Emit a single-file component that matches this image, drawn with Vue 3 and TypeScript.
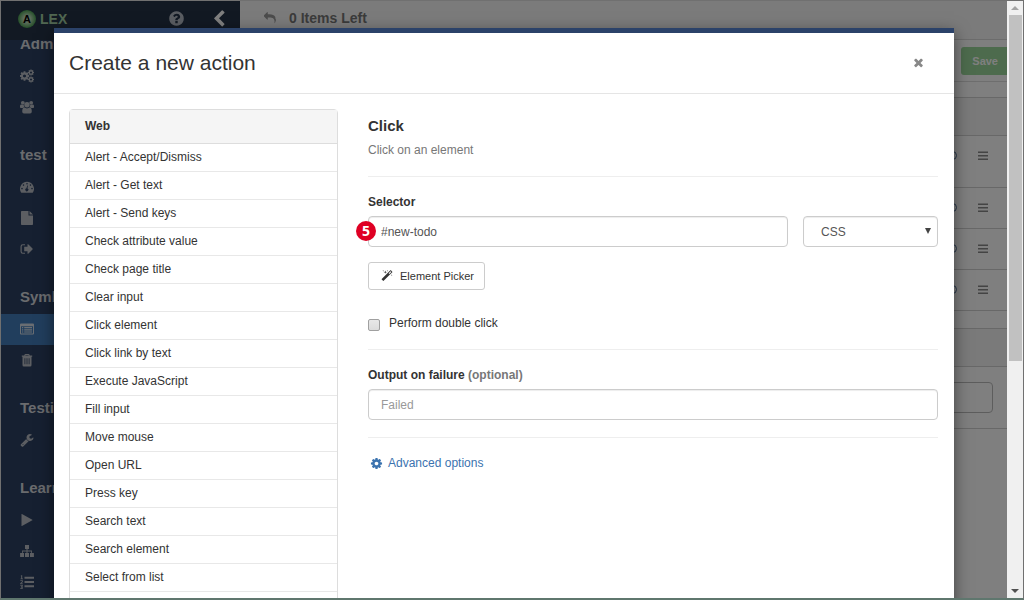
<script setup lang="ts">
import { ref } from 'vue'

interface NavGroup {
  title: string
  items: { icon: string; label: string; active?: boolean }[]
}

const groups: NavGroup[] = [
  { title: 'Admin', items: [{ icon: 'cogs', label: 'Settings' }, { icon: 'users', label: 'Users' }] },
  {
    title: 'test',
    items: [
      { icon: 'gauge', label: 'Dashboard' },
      { icon: 'file', label: 'Files' },
      { icon: 'exit', label: 'Close project' },
    ],
  },
  { title: 'Symbols', items: [{ icon: 'table', label: 'Manage', active: true }, { icon: 'trash', label: 'Trash' }] },
  { title: 'Testing', items: [{ icon: 'wrench', label: 'Tests' }] },
  {
    title: 'Learning',
    items: [
      { icon: 'play', label: 'Start' },
      { icon: 'sitemap', label: 'Results' },
      { icon: 'list', label: 'Counters' },
    ],
  },
]

const actions: string[] = [
  'Alert - Accept/Dismiss',
  'Alert - Get text',
  'Alert - Send keys',
  'Check attribute value',
  'Check page title',
  'Clear input',
  'Click element',
  'Click link by text',
  'Execute JavaScript',
  'Fill input',
  'Move mouse',
  'Open URL',
  'Press key',
  'Search text',
  'Search element',
  'Select from list',
]

const selector = ref('#new-todo')
const selectorType = ref('CSS')
const doubleClick = ref(false)
const failure = ref('')
</script>

<template>
  <div class="window">
    <svg class="sprite" aria-hidden="true">
      <symbol id="i-cog" viewBox="0 0 1792 1792">
        <path d="M1152 896q0-106-75-181t-181-75-181 75-75 181 75 181 181 75 181-75 75-181zm512-109v222q0 12-8 23t-20 13l-185 28q-19 54-39 91 35 50 107 138 10 12 10 25t-9 23q-27 37-99 108t-94 71q-12 0-26-9l-138-108q-44 23-91 38-16 136-29 186-7 28-36 28h-222q-14 0-24.500-8.500t-11.500-21.500l-28-184q-49-16-90-37l-141 107q-10 9-25 9-14 0-25-11-126-114-165-168-7-10-7-23 0-12 8-23 15-21 51-66.500t54-70.500q-27-50-41-99l-183-27q-13-2-21-12.500t-8-23.500v-222q0-12 8-23t19-13l186-28q14-46 39-92-40-57-107-138-10-12-10-24 0-10 9-23 26-36 98.500-107.500t94.500-71.500q13 0 26 10l138 107q44-23 91-38 16-136 29-186 7-28 36-28h222q14 0 24.500 8.500t11.500 21.500l28 184q49 16 90 37l142-107q9-9 24-9 13 0 25 10 129 119 165 170 7 8 7 22 0 12-8 23-15 21-51 66.500t-54 70.500q26 50 41 98l183 28q13 2 21 12.500t8 23.500z" />
      </symbol>
      <symbol id="i-cogs" viewBox="0 0 14 14">
        <use href="#i-cog" x="-1" y="1.500" width="11" height="11" />
        <use href="#i-cog" x="7.500" y="0" width="7" height="7" />
        <use href="#i-cog" x="7.500" y="7" width="7" height="7" />
      </symbol>
      <symbol id="i-users" viewBox="0 0 14 14">
        <circle cx="2.800" cy="2.800" r="1.900" />
        <circle cx="11.200" cy="2.800" r="1.900" />
        <path d="M0 7.600V6Q0 4.500 1 4.500L4 5.200Q3.800 6.500 4.600 7.200Q3.500 7.200 2.800 8H1Q0 8 0 7.600zM14 7.600V6Q14 4.500 13 4.500L10 5.200Q10.200 6.500 9.400 7.200Q10.500 7.200 11.200 8H13Q14 8 14 7.600z" />
        <circle cx="7" cy="4.800" r="2.700" />
        <path d="M2.200 11.500Q2.200 7.700 4.400 7.600Q7 9.200 9.600 7.600Q11.800 7.700 11.800 11.500Q11.800 13.500 10 13.500H4Q2.200 13.500 2.200 11.500z" />
      </symbol>
      <symbol id="i-gauge" viewBox="0 0 14 14">
        <path fill-rule="evenodd" d="M7 1.800A7 7 0 0 0 1.100 12.500Q1.300 12.800 1.700 12.800H12.300Q12.700 12.800 12.900 12.500A7 7 0 0 0 7 1.800zM7 2.900a.8 .8 0 1 1 0 1.600a.8 .8 0 1 1 0-1.600zM3.500 4.300a.8 .8 0 1 1 0 1.600a.8 .8 0 1 1 0-1.600zM10.500 4.300a.8 .8 0 1 1 0 1.600a.8 .8 0 1 1 0-1.600zM2 7.800a.8 .8 0 1 1 0 1.600a.8 .8 0 1 1 0-1.600zM12 7.800a.8 .8 0 1 1 0 1.600a.8 .8 0 1 1 0-1.600zM7.900 5.600L7.500 8.400A1.500 1.500 0 1 1 6.500 8.300L7.200 5.500z" />
      </symbol>
      <symbol id="i-file" viewBox="0 0 14 14">
        <path d="M8.500 0V4.500H13V13.200Q13 14 12.200 14H1.800Q1 14 1 13.200V.8Q1 0 1.800 0zM9.500 0L13 3.500H9.500z" />
      </symbol>
      <symbol id="i-exit" viewBox="0 0 14 14">
        <path d="M5 2.200H2.800Q.5 2.200 .5 4.500V9.500Q.5 11.800 2.800 11.800H5V10.700H3Q1.700 10.700 1.700 9.400V4.600Q1.700 3.300 3 3.300H5z" />
        <path d="M7.500 2.300Q8 2 8.500 2.500L12.500 6.500Q13 7 12.500 7.500L8.500 11.500Q8 12 7.500 11.700V9.300H4.200V4.700H7.500z" />
      </symbol>
      <symbol id="i-table" viewBox="0 0 14 14">
        <path fill-rule="evenodd" d="M1 1.500H13Q14 1.500 14 2.500V11.500Q14 12.500 13 12.500H1Q0 12.500 0 11.500V2.500Q0 1.500 1 1.500zM1 4.300V11.500H13V4.300zM2 5H3.200V6.200H2zM4.200 5H12V6.200H4.200zM2 7.200H3.200V8.400H2zM4.200 7.200H12V8.400H4.200zM2 9.400H3.200V10.600H2zM4.200 9.400H12V10.600H4.200z" />
      </symbol>
      <symbol id="i-trash" viewBox="0 0 14 14">
        <path fill-rule="evenodd" d="M5.500 1H8.500Q9.200 1 9.400 1.600L9.800 2.600H12.200V3.800H11.500V12Q11.500 13.500 10.200 13.500H3.800Q2.500 13.500 2.500 12V3.800H1.800V2.600H4.200L4.600 1.600Q4.800 1 5.500 1zM5.600 2L5.300 2.600H8.700L8.400 2zM4.500 5.200V11.300H5.300V5.200zM6.600 5.200V11.300H7.400V5.200zM8.700 5.200V11.300H9.500V5.200z" />
      </symbol>
      <symbol id="i-wrench" viewBox="0 0 1792 1792">
        <path d="M448 1472q0-26-19-45t-45-19-45 19-19 45 19 45 45 19 45-19 19-45zm644-420l-682 682q-37 37-90 37-52 0-91-37l-106-108q-38-36-38-90 0-53 38-91l681-681q39 98 114.500 173.500t173.500 114.500zm634-435q0 39-23 106-47 134-164.500 217.500t-258.500 83.500q-185 0-316.500-131.500t-131.500-316.500 131.500-316.500 316.500-131.500q58 0 121.500 16.500t107.500 46.500q16 11 16 28t-16 28l-293 169v224l193 107q5-3 79-48.500t135.500-81 70.500-35.500q15 0 23.500 10t8.500 25z" />
      </symbol>
      <symbol id="i-play" viewBox="0 0 1792 1792">
        <path d="M1576 927l-1328 738q-23 13-39.500 3t-16.500-36v-1472q0-26 16.500-36t39.500 3l1328 738q23 13 23 31t-23 31z" />
      </symbol>
      <symbol id="i-sitemap" viewBox="0 0 14 14">
        <path d="M5 1H9V5H7.500V6.500H12V9H13.900V13H10V9H11.200V7.400H7.500V9H9V13H5V9H6.500V7.400H2.800V9H4V13H.1V9H2V6.500H6.500V5H5z" />
      </symbol>
      <symbol id="i-list" viewBox="0 0 14 14">
        <path d="M4.500 1.800H14V3.800H4.500zM4.500 6H14V8H4.500zM4.500 10.200H14V12.200H4.500zM.5 1L1.500 .2H2.200V3.500H3V4.200H.5V3.500H1.200V1.200zM.3 5.200H2.800V7L1.300 8.500H3V9.300H.2V8.300L1.900 6.700V6H.3zM.3 10.200H3V11L2.200 12Q3 12.300 3 13Q3 14 1.600 14H.2V13.200H1.700V12.500H.9V12L1.600 11H.3z" />
      </symbol>
      <symbol id="i-help" viewBox="0 0 1792 1792">
        <path d="M1024 1376v-192q0-14-9-23t-23-9h-192q-14 0-23 9t-9 23v192q0 14 9 23t23 9h192q14 0 23-9t9-23zm256-672q0-88-55.500-163t-138.500-116-170-41q-243 0-371 213-15 24 8 42l132 100q7 6 19 6 16 0 25-12 53-68 86-92 34-24 86-24 48 0 85.500 26t37.500 59q0 38-20 61t-68 45q-63 28-115.500 86.500t-52.500 125.500v36q0 14 9 23t23 9h192q14 0 23-9t9-23q0-19 21.500-49.500t54.500-49.500q32-18 49-28.500t46-35 44.500-48 28-60.500 12.500-81zm384 192q0 209-103 385.500t-279.500 279.500-385.500 103-385.500-103-279.500-279.500-103-385.500 103-385.500 279.500-279.500 385.500-103 385.500 103 279.500 279.500 103 385.500z" />
      </symbol>
      <symbol id="i-left" viewBox="0 0 1792 1792">
        <path d="M1427 301l-531 531 531 531q19 19 19 45t-19 45l-166 166q-19 19-45 19t-45-19l-742-742q-19-19-19-45t19-45l742-742q19-19 45-19t45 19l166 166q19 19 19 45t-19 45z" />
      </symbol>
      <symbol id="i-reply" viewBox="0 0 1792 1792">
        <path d="M1792 1120q0 166-127 451-3 7-10.500 24t-13.500 30-13 22q-12 17-28 17-15 0-23.500-10t-8.500-25q0-9 2.500-26.500t2.500-23.500q5-68 5-123 0-112-19.500-200.500t-54-153.500-89-112-118-78.500-148.500-48-170-24-192-6.500h-224v256q0 26-19 45t-45 19-45-19l-512-512q-19-19-19-45t19-45l512-512q19-19 45-19t45 19 19 45v256h224q713 0 875 403 53 134 53 333z" />
      </symbol>
      <symbol id="i-bars" viewBox="0 0 14 14">
        <path d="M2 2.500H12V4H2zM2 6H12V7.500H2zM2 9.500H12V11H2z" />
      </symbol>
      <symbol id="i-times" viewBox="0 0 1792 1792">
        <path d="M1490 1322q0 40-28 68l-136 136q-28 28-68 28t-68-28l-294-294-294 294q-28 28-68 28t-68-28l-136-136q-28-28-28-68t28-68l294-294-294-294q-28-28-28-68t28-68l136-136q28-28 68-28t68 28l294 294 294-294q28-28 68-28t68 28l136 136q28 28 28 68t-28 68l-294 294 294 294q28 28 28 68z" />
      </symbol>
      <symbol id="i-magic" viewBox="0 0 1792 1792">
        <path d="M1254 581l293-293-107-107-293 293zm447-293q0 27-18 45l-1286 1286q-18 18-45 18t-45-18l-198-198q-18-18-18-45t18-45l1286-1286q18-18 45-18t45 18l198 198q18 18 18 45zm-1351-190l98 30-98 30-30 98-30-98-98-30 98-30 30-98zm350 162l196 60-196 60-60 196-60-196-196-60 196-60 60-196zm930 478l98 30-98 30-30 98-30-98-98-30 98-30 30-98zm-640-640l98 30-98 30-30 98-30-98-98-30 98-30 30-98z" />
      </symbol>
    </svg>

    <div class="page">
      <aside class="sidebar">
        <header class="brand">
          <span class="logo">A</span>
          <span class="brand-name">LEX</span>
          <button class="bare help" type="button" aria-label="Help"><svg><use href="#i-help" /></svg></button>
          <button class="bare collapse" type="button" aria-label="Collapse"><svg><use href="#i-left" /></svg></button>
        </header>
        <div class="nav-clip">
          <nav class="nav">
            <section v-for="group in groups" :key="group.title">
              <h2>{{ group.title }}</h2>
              <a
                v-for="item in group.items"
                :key="item.icon"
                href="#"
                :class="{ active: item.active }"
                :aria-label="item.label"
              >
                <svg><use :href="'#i-' + item.icon" /></svg>
              </a>
            </section>
          </nav>
        </div>
      </aside>

      <main class="main">
        <header class="topbar">
          <svg><use href="#i-reply" /></svg>
          <strong>0 Items Left</strong>
        </header>
        <div class="toolbar"><button class="save" type="button">Save</button></div>
        <div class="panel">
          <div class="panel-head"></div>
          <div v-for="n in 4" :key="n" class="step">
            <span class="ring"></span>
            <svg><use href="#i-bars" /></svg>
          </div>
        </div>
        <div class="panel">
          <div class="panel-head"></div>
          <div class="panel-body"><input type="text" aria-label="Result" /></div>
        </div>
      </main>
    </div>

    <div class="overlay">
      <section class="modal" role="dialog" aria-labelledby="modal-title">
        <header class="modal-head">
          <h1 id="modal-title">Create a new action</h1>
          <button class="bare close" type="button" aria-label="Close"><svg><use href="#i-times" /></svg></button>
        </header>
        <div class="modal-body">
          <div class="actions">
            <h2>Web</h2>
            <ul>
              <li v-for="action in actions" :key="action">{{ action }}</li>
            </ul>
          </div>
          <form class="form" @submit.prevent>
            <h2>Click</h2>
            <p class="muted">Click on an element</p>
            <hr />
            <label class="field-label" for="selector">Selector</label>
            <div class="row">
              <div class="marked">
                <input id="selector" v-model="selector" class="control" type="text" />
                <span class="marker">5</span>
              </div>
              <div class="select">
                <select v-model="selectorType" class="control" aria-label="Selector type">
                  <option>CSS</option>
                  <option>XPath</option>
                </select>
                <svg viewBox="0 0 6 6"><path d="M0 0H6L3 6z" /></svg>
              </div>
            </div>
            <button class="picker" type="button"><svg><use href="#i-magic" /></svg>Element Picker</button>
            <label class="check"><input v-model="doubleClick" type="checkbox" /><span>Perform double click</span></label>
            <hr />
            <label class="field-label" for="failure">Output on failure <span class="muted">(optional)</span></label>
            <input id="failure" v-model="failure" class="control" type="text" placeholder="Failed" />
            <hr />
            <a class="advanced" href="#"><svg><use href="#i-cog" /></svg>Advanced options</a>
          </form>
        </div>
      </section>
    </div>

    <div class="scrollbar" aria-hidden="true">
      <svg class="up" viewBox="0 0 8 4"><path d="M0 4L4 0L8 4z" /></svg>
      <div class="thumb"></div>
      <svg class="down" viewBox="0 0 8 4"><path d="M0 0H8L4 4z" /></svg>
    </div>
  </div>
</template>

<style>
body {
  margin: 0;
}
</style>

<style scoped>
* {
  box-sizing: border-box;
}
.window {
  position: relative;
  display: flex;
  height: 100vh;
  overflow: hidden;
  border: 1px solid #707070;
  border-bottom: 2px solid #5f776e;
  font-family: "Liberation Sans", Arial, sans-serif;
  font-size: 12px;
  line-height: 18px;
  color: #333;
}
.sprite {
  position: absolute;
  width: 0;
  height: 0;
}
svg {
  display: block;
  fill: currentColor;
  flex: none;
}
h1, h2, p, ul {
  margin: 0;
  padding: 0;
}
input, select, button {
  font: inherit;
  margin: 0;
}
.bare {
  padding: 0;
  border: 0;
  background: none;
  color: inherit;
}
.page {
  flex: 1;
  min-width: 0;
  display: flex;
}

/* sidebar */
.sidebar {
  flex: none;
  width: 239px;
  display: flex;
  flex-direction: column;
  background: #2c4162;
  color: #fff;
}
.brand {
  flex: none;
  display: flex;
  align-items: center;
  height: 39px;
  padding: 0 12px 4px 17px;
  background: #243347;
}
.logo {
  width: 18px;
  height: 18px;
  border-radius: 50%;
  background: radial-gradient(#c0dcbc 0 25%, #3f9a48 75%);
  color: #000;
  font-size: 11px;
  font-weight: bold;
  text-align: center;
}
.brand-name {
  margin-left: 4px;
  font-size: 14px;
  font-weight: bold;
  color: #a3cfa3;
}
.help {
  margin-left: auto;
  color: #b4bac4;
}
.help svg {
  width: 17px;
  height: 17px;
}
.collapse {
  margin-left: 25px;
}
.collapse svg {
  width: 18px;
  height: 18px;
}
.nav-clip {
  flex: 1;
  min-height: 0;
  overflow: hidden;
}
.nav {
  margin-top: -28px;
}
.nav h2 {
  padding: 22px 0 7px 19px;
  font-size: 15px;
  line-height: 20px;
  color: #d4d7dc;
}
.nav a {
  display: flex;
  align-items: center;
  height: 31px;
  padding: 0 0 1px 19px;
  color: #b8bcc4;
}
.nav a.active {
  background: #427cba;
  color: #d4dce6;
}
.nav svg {
  width: 14px;
  height: 14px;
}

/* page behind the dialog */
.main {
  flex: 1;
  min-width: 0;
  overflow: hidden;
  background: #fff;
}
.topbar {
  display: flex;
  align-items: center;
  height: 39px;
  padding: 0 24px 4px;
  border-bottom: 1px solid #d8d8d8;
  background: #f6f6f6;
  color: #777;
  font-size: 14px;
}
.topbar svg {
  width: 12px;
  height: 12px;
  margin-right: 13px;
  color: #999;
}
.toolbar {
  display: flex;
  justify-content: flex-end;
  height: 42px;
  padding-top: 7px;
  border-bottom: 1px solid #ddd;
}
.save {
  height: 28px;
  padding: 0 9px 0 11px;
  border: 0;
  border-radius: 3px 0 0 3px;
  background: #9ad69a;
  color: #fff;
  font-size: 11px;
  font-weight: bold;
}
.panel {
  margin: 15px 0 17px 30px;
  border: 1px solid #d0d0d0;
  border-right: 0;
}
.panel-head {
  height: 37px;
  background: #f5f5f5;
}
.step {
  display: flex;
  justify-content: flex-end;
  align-items: flex-start;
  height: 41px;
  padding: 13px 17px 0 0;
  border-top: 1px solid #d0d0d0;
}
.step:nth-child(2) {
  height: 52px;
}
.step svg {
  width: 14px;
  height: 14px;
  color: #888;
}
.ring {
  width: 9px;
  height: 9px;
  margin: 2px 19px 0 0;
  border: 1px solid #4d6d95;
  border-radius: 50%;
}
.panel-body {
  padding: 15px 14px;
  border-top: 1px solid #d0d0d0;
}
.panel-body input {
  display: block;
  width: 100%;
  height: 31px;
  border: 1px solid #bbb;
  border-radius: 4px;
  background: #fff;
}

/* dialog */
.overlay {
  position: absolute;
  inset: 0 16px 0 0;
  padding-top: 27px;
  overflow: hidden;
  background: rgba(0, 0, 0, 0.5);
}
.modal {
  max-width: 900px;
  min-height: 100%;
  margin: 0 auto;
  border-top: 5px solid #2b4269;
  background: #fff;
  box-shadow: 0 5px 15px rgba(0, 0, 0, 0.5);
}
.modal-head {
  display: flex;
  align-items: center;
  justify-content: space-between;
  height: 61px;
  padding: 0 29px 0 15px;
  border-bottom: 1px solid #e5e5e5;
}
.modal-head h1 {
  font-size: 21px;
  line-height: 30px;
  font-weight: normal;
}
.close {
  padding-bottom: 2px;
  color: #888;
}
.close svg {
  width: 13px;
  height: 13px;
}
.modal-body {
  display: grid;
  grid-template-columns: 269fr 570fr;
  gap: 30px;
  padding: 15px 16px 15px 15px;
}
.actions {
  border: 1px solid #ddd;
  border-radius: 4px 4px 0 0;
  padding-bottom: 30px;
}
.actions h2 {
  padding: 7px 15px 8px;
  border-bottom: 1px solid #ddd;
  background: #f5f5f5;
  font-size: 12px;
  line-height: 18px;
}
.actions ul {
  list-style: none;
}
.actions li {
  padding: 4px 15px 5px;
  border-bottom: 1px solid #e8e8e8;
}
.form {
  padding-top: 8px;
}
.form h2 {
  font-size: 15px;
  line-height: 18px;
}
.form p {
  margin-top: 6px;
}
.muted {
  color: #777;
}
hr {
  height: 1px;
  margin: 17px 0 16px;
  border: 0;
  background: #eee;
}
.field-label {
  display: block;
  margin-bottom: 5px;
  font-weight: bold;
}
.row {
  display: flex;
  gap: 15px;
}
.marked {
  position: relative;
  flex: 1;
}
.marker {
  position: absolute;
  left: -12px;
  top: 5px;
  width: 20px;
  height: 20px;
  border-radius: 50%;
  background: #df0024;
  color: #fff;
  font: bold 14px/20px "Open Sans", sans-serif;
  text-align: center;
}
.control {
  display: block;
  width: 100%;
  height: 31px;
  padding: 0 12px;
  border: 1px solid #ccc;
  border-radius: 4px;
  background: #fff;
  box-shadow: inset 0 1px 1px rgba(0, 0, 0, 0.075);
  color: #555;
}
.control::placeholder {
  color: #999;
}
.select {
  position: relative;
  width: 135px;
}
.select .control {
  appearance: none;
  padding: 0 17px;
}
.select svg {
  position: absolute;
  right: 7px;
  top: 12px;
  width: 6px;
  height: 6px;
  color: #444;
  pointer-events: none;
}
.picker {
  display: flex;
  align-items: center;
  height: 28px;
  margin-top: 15px;
  padding: 0 10px 0 12px;
  border: 1px solid #ccc;
  border-radius: 3px;
  background: #fff;
  color: #333;
  font-size: 11px;
}
.picker svg {
  width: 12px;
  height: 12px;
  margin-right: 7px;
}
.check {
  display: flex;
  margin-top: 24px;
}
.check input {
  appearance: none;
  width: 12px;
  height: 12px;
  margin: 5px 9px 0 0;
  border: 1px solid #a0a0a0;
  border-radius: 2px;
  background: linear-gradient(#e8e8e8, #dcdcdc);
}
.advanced {
  display: inline-flex;
  align-items: center;
  padding-left: 2px;
  color: #3b73af;
  text-decoration: none;
}
.advanced svg {
  width: 13px;
  height: 13px;
  margin-right: 5px;
}

/* scroll bar */
.scrollbar {
  display: flex;
  flex-direction: column;
  width: 16px;
  background: #f0f0f0;
}
.scrollbar svg {
  width: 8px;
  height: 4px;
  margin: 5px auto;
}
.up {
  color: #a3a3a3;
}
.down {
  color: #505050;
}
.thumb {
  height: 58%;
  margin: 0 1px auto 2px;
  background: #c1c1c1;
}
</style>
